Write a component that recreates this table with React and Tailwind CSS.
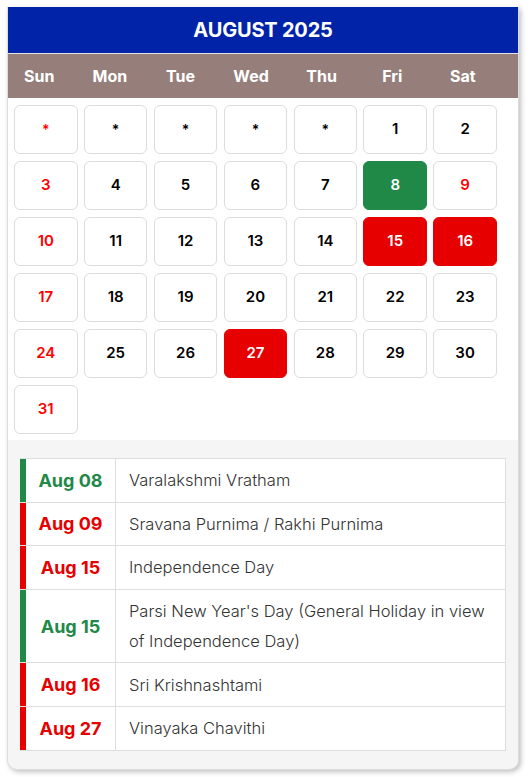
import React from "react";

const days = ["Sun", "Mon", "Tue", "Wed", "Thu", "Fri", "Sat"];

const cells = [
  ["*", "sun"], ["*"], ["*"], ["*"], ["*"], ["1"], ["2"],
  ["3", "sun"], ["4"], ["5"], ["6"], ["7"], ["8", "green"], ["9", "sun"],
  ["10", "sun"], ["11"], ["12"], ["13"], ["14"], ["15", "red"], ["16", "red"],
  ["17", "sun"], ["18"], ["19"], ["20"], ["21"], ["22"], ["23"],
  ["24", "sun"], ["25"], ["26"], ["27", "red"], ["28"], ["29"], ["30"],
  ["31", "sun"],
];

const events = [
  ["Aug 08", "Varalakshmi Vratham", "g"],
  ["Aug 09", "Sravana Purnima / Rakhi Purnima", "r"],
  ["Aug 15", "Independence Day", "r"],
  ["Aug 15", "Parsi New Year's Day (General Holiday in view of Independence Day)", "g"],
  ["Aug 16", "Sri Krishnashtami", "r"],
  ["Aug 27", "Vinayaka Chavithi", "r"],
];

function Cell({ v, kind }) {
  let cls = "bg-white border border-[#dcdcdc] text-black";
  if (kind === "sun") cls = "bg-white border border-[#dcdcdc] text-[#ff0000]";
  if (kind === "green") cls = "bg-[#218947] border border-[#218947] text-white";
  if (kind === "red") cls = "bg-[#e60000] border border-[#e60000] text-white";
  const star = v === "*";
  return (
    <div
      className={`h-[49px] rounded-[6px] flex items-center justify-center font-semibold ${
        star ? "text-[14px]" : "text-[15px]"
      } ${cls}`}
    >
      {v}
    </div>
  );
}

export default function App() {
  return (
    <div className="w-[530px] h-[777px] bg-white pt-[7px] pl-[7px] font-['Inter',sans-serif]">
      <div className="w-[512px] rounded-b-[10px] border-l border-r border-b border-[#dddddd] shadow-[2px_2px_5px_rgba(0,0,0,0.25)] overflow-hidden bg-[#f5f5f5]">
        <div className="h-[47px] bg-[#0023a8] flex items-center justify-center text-white font-bold text-[20px] tracking-[-0.2px] border-b border-[#e5e5e5]">
          AUGUST 2025
        </div>
        <div className="h-[44px] bg-[#967f7b] flex items-center">
          <div className="grid grid-cols-[repeat(7,70.6px)] -ml-[4px]">
            {days.map((d) => (
              <div key={d} className="text-center text-white font-bold text-[16px]">
                {d}
              </div>
            ))}
          </div>
        </div>
        <div className="bg-white pt-[7px] pb-[6px] pl-[6px]">
          <div className="grid grid-cols-[repeat(7,63.5px)] gap-x-[6.4px] gap-y-[7px]">
            {cells.map(([v, k], i) => (
              <Cell key={i} v={v} kind={k} />
            ))}
          </div>
        </div>
        <div className="px-[12px] pt-[18px] pb-[18px]">
          <div className="bg-white border-t border-r border-[#dddddd]">
            {events.map(([d, t, c], i) => (
              <div key={i} className="flex border-b border-[#dddddd]">
                <div
                  className={`w-[6px] shrink-0 ${c === "g" ? "bg-[#218947]" : "bg-[#e60000]"}`}
                ></div>
                <div
                  className={`w-[90px] shrink-0 flex items-center justify-center font-bold text-[18px] border-r border-[#dddddd] ${
                    c === "g" ? "text-[#218947]" : "text-[#e60000]"
                  }`}
                >
                  {d}
                </div>
                <div className="flex-1 pl-[13px] pr-[13px] py-[6.3px] text-[16.5px] leading-[30px] font-light text-[#333333]">
                  {t}
                </div>
              </div>
            ))}
          </div>
        </div>
      </div>
    </div>
  );
}
